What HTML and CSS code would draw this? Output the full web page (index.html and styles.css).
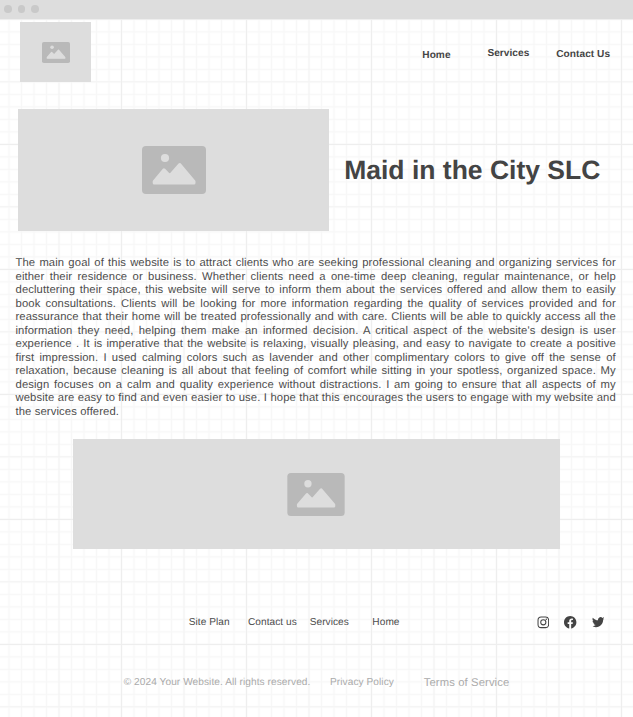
FILE: index.html
```html
<!DOCTYPE html>
<html lang="en">
<head>
<meta charset="utf-8">
<title>Maid in the City SLC</title>
<link rel="stylesheet" href="styles.css">
</head>
<body>
<svg class="grid" width="633" height="717" aria-hidden="true">
  <defs>
    <pattern id="minor" x="2.75" y="0.65" width="12.5" height="12.5" patternUnits="userSpaceOnUse">
      <path d="M6.25 0V12.5M0 6.25H12.5" stroke="#f7f7f7" stroke-width="1.4"/>
    </pattern>
    <pattern id="middle" x="27.75" y="50.5" width="62.5" height="62.5" patternUnits="userSpaceOnUse">
      <path d="M31.25 0V62.5M0 31.25H62.5" stroke="#f4f4f4" stroke-width="1.2"/>
    </pattern>
    <pattern id="major" x="59" y="82" width="125" height="125" patternUnits="userSpaceOnUse">
      <path d="M62.5 0V125M0 62.5H125" stroke="#eee" stroke-width="1"/>
    </pattern>
    <symbol id="photo" viewBox="0 0 64 48">
      <rect width="64" height="48" rx="4" fill="#b9b9b9"/>
      <circle cx="23" cy="12" r="4.1" fill="#ddd"/>
      <path d="M12.2 35.4L22 23.8L27.8 29.8L37.7 18.5L52 35.4V37H12.2Z" fill="#ddd" stroke="#ddd" stroke-width="3" stroke-linejoin="round"/>
    </symbol>
  </defs>
  <rect width="633" height="717" fill="url(#minor)"/>
  <rect width="633" height="717" fill="url(#middle)"/>
  <rect width="633" height="717" fill="url(#major)"/>
</svg>
<div class="page">
  <div class="bar"><i></i><i></i><i></i></div>
  <header>
    <div class="box logo"><svg><use href="#photo"/></svg></div>
    <nav><a class="home">Home</a><a class="services">Services</a><a class="contact">Contact Us</a></nav>
  </header>
  <section class="hero">
    <div class="box picture"><svg><use href="#photo"/></svg></div>
    <h1>Maid in the City SLC</h1>
  </section>
  <p class="about">The main goal of this website is to attract clients who are seeking professional cleaning and organizing services for either their residence or business. Whether clients need a one-time deep cleaning, regular maintenance, or help decluttering their space, this website will serve to inform them about the services offered and allow them to easily book consultations. Clients will be looking for more information regarding the quality of services provided and for reassurance that their home will be treated professionally and with care. Clients will be able to quickly access all the information they need, helping them make an informed decision. A critical aspect of the website's design is user experience . It is imperative that the website is relaxing, visually pleasing, and easy to navigate to create a positive first impression. I used calming colors such as lavender and other complimentary colors to give off the sense of relaxation, because cleaning is all about that feeling of comfort while sitting in your spotless, organized space. My design focuses on a calm and quality experience without distractions. I am going to ensure that all aspects of my website are easy to find and even easier to use. I hope that this encourages the users to engage with my website and the services offered.</p>
  <div class="box banner"><svg><use href="#photo"/></svg></div>
  <footer>
    <div class="links">
      <a class="plan">Site Plan</a><a class="us">Contact us</a><a class="serv">Services</a><a>Home</a>
      <div class="social">
        <svg viewBox="0 0 24 24" fill="none" stroke="#444" stroke-width="2"><rect x="2" y="2" width="20.5" height="20.5" rx="6"/><circle cx="12.2" cy="12.2" r="5"/><circle cx="18" cy="6.4" r="1.4" fill="#444" stroke="none"/></svg>
        <svg viewBox="0 0 24 24" fill="#444"><path d="M24 12.07C24 5.4 18.63 0 12 0S0 5.4 0 12.07C0 18.1 4.39 23.1 10.13 24v-8.44H7.08v-3.49h3.05V9.41c0-3.02 1.79-4.69 4.53-4.69 1.31 0 2.68.24 2.68.24v2.97h-1.51c-1.49 0-1.96.93-1.96 1.89v2.25h3.33l-.53 3.49h-2.8V24C19.61 23.1 24 18.1 24 12.07Z"/></svg>
        <svg viewBox="0 0 24 24" fill="#444"><path d="M23.95 4.57a10 10 0 0 1-2.82.78 4.96 4.96 0 0 0 2.16-2.73c-.95.56-2 .96-3.13 1.18a4.92 4.92 0 0 0-8.38 4.48C7.69 8.1 4.07 6.13 1.64 3.16a4.82 4.82 0 0 0-.67 2.48c0 1.71.87 3.21 2.19 4.1a4.9 4.9 0 0 1-2.23-.62v.06a4.92 4.92 0 0 0 3.95 4.83 5 5 0 0 1-2.21.08 4.94 4.94 0 0 0 4.6 3.42A9.87 9.87 0 0 1 0 19.54a13.99 13.99 0 0 0 7.55 2.21c9.05 0 14-7.5 14-13.98 0-.21 0-.42-.02-.63a9.94 9.94 0 0 0 2.42-2.57Z"/></svg>
      </div>
    </div>
    <div class="legal"><span class="copy">© 2024 Your Website. All rights reserved.</span><a class="privacy">Privacy Policy</a><a class="terms">Terms of Service</a></div>
  </footer>
</div>
</body>
</html>
```
FILE: styles.css
```css
* { box-sizing: border-box; }
body {
  margin: 0;
  background: #fff;
  color: #444;
  font-family: "Liberation Sans", Arial, sans-serif;
  text-rendering: geometricPrecision;
}
.grid { position: absolute; top: 0; left: 0; z-index: -1; }
.page { width: 633px; height: 717px; overflow: hidden; }
.bar { display: flex; align-items: flex-start; gap: 6px; height: 19px; padding: 5px 4px; background: #ddd; }
.bar i { width: 7.6px; height: 7.6px; border-radius: 50%; background: #c9c9c9; }
.box { display: flex; align-items: center; justify-content: center; background: #ddd; }
header { display: flex; height: 90px; padding: 3px 0 0 20px; }
.logo { width: 71px; height: 60px; }
.logo svg { width: 28px; height: 21px; margin-left: 1px; }
nav { display: flex; align-items: flex-start; padding-top: 26px; margin-left: 331.3px; font-size: 10.1px; letter-spacing: .05px; font-weight: 700; line-height: 12px; white-space: nowrap; }
nav .home { width: 65.1px; padding-top: 2px; }
nav .services { width: 68.9px; }
nav .contact { padding-top: 1px; }
.hero { display: flex; height: 122px; margin-left: 18px; }
.picture { width: 311px; }
.picture svg { width: 64px; height: 48px; margin-left: 1px; }
h1 { margin: 45px 0 0 15.2px; font-size: 26.5px; line-height: 32px; white-space: nowrap; }
.about { width: 600.3px; margin: 26px 0 0 15.5px; color: #4c4c4c; font-size: 11.25px; letter-spacing: .12px; line-height: 13.5px; text-align: justify; }
.banner { width: 487px; height: 110px; margin: 20px 0 0 73px; }
.banner svg { width: 58px; height: 43px; margin: 1px 0 0 -1.4px; }
.links { display: flex; align-items: center; height: 14px; margin: 67px 0 0 188.7px; color: #4c4c4c; font-size: 10.1px; letter-spacing: .06px; line-height: 14px; }
.plan { width: 59.3px; }
.us { width: 61.7px; }
.serv { width: 62.7px; }
.social { display: flex; gap: 15px; margin-left: auto; padding-right: 29px; }
.social svg { width: 12.4px; height: 12.4px; margin-top: -1px; }
.legal { display: flex; align-items: center; height: 14px; margin: 46px 0 0 123.7px; color: #aaa; font-size: 10.1px; letter-spacing: .08px; line-height: 14px; white-space: nowrap; }
.copy { width: 206.3px; }
.privacy { width: 93.7px; }
.terms { font-size: 11.25px; letter-spacing: .12px; }
```
